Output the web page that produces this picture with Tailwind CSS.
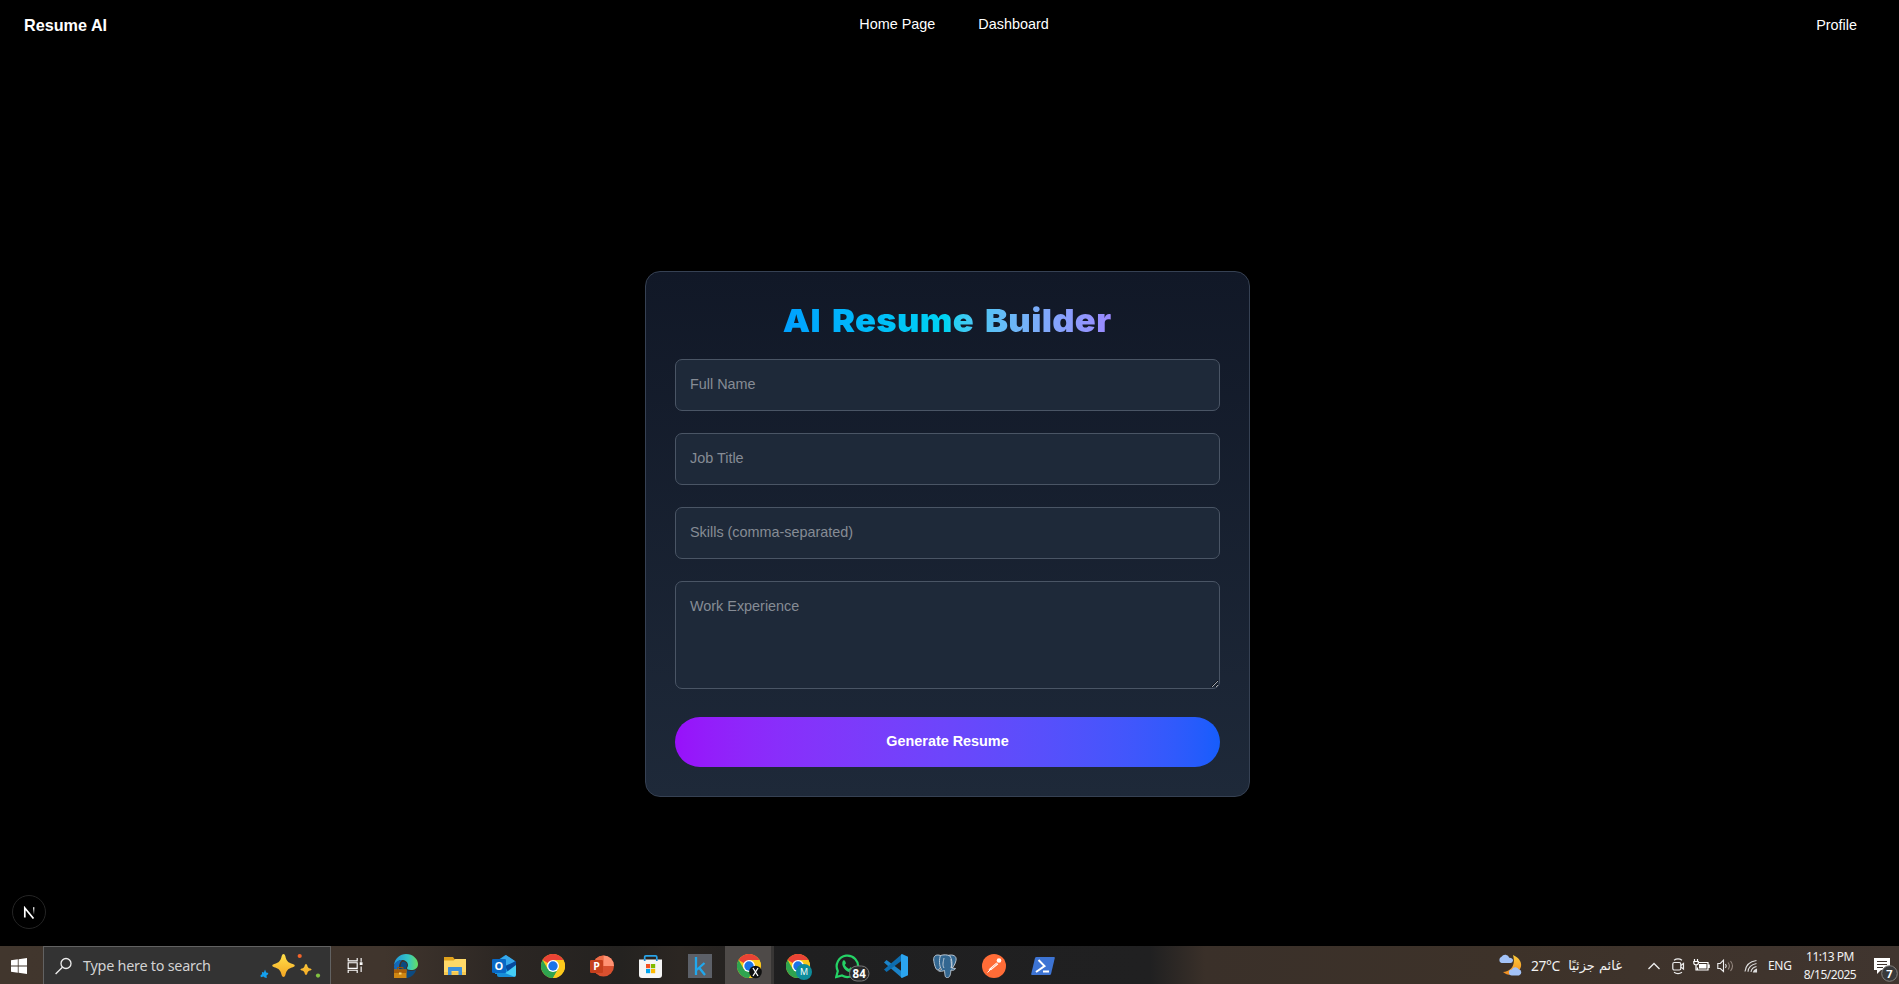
<!DOCTYPE html>
<html lang="en">
<head>
<meta charset="utf-8">
<title>Resume AI</title>
<script src="https://cdn.jsdelivr.net/npm/@tailwindcss/browser@4"></script>
</head>
<body class="flex h-screen flex-col overflow-hidden bg-black font-['Liberation_Sans',Arial,sans-serif] text-[14.4px] text-white">
<nav class="flex h-[50px] shrink-0 items-start justify-between pl-[24px] pr-[42px]">
  <div class="w-[300px] pt-[13px] text-[16.2px] leading-[25px] font-bold">Resume AI</div>
  <div class="ml-[27px] flex gap-[43px] pt-[13px] leading-[22px]"><a>Home Page</a><a>Dashboard</a></div>
  <div class="w-[300px] pt-[14px] text-right leading-[22px]">Profile</div>
</nav>

<main class="relative flex-1">
  <section class="mt-[221px] ml-[645px] flex h-[526px] w-[605px] flex-col rounded-[15px] border border-[#364153] bg-linear-to-b from-[#111827] to-[#1e2939] px-[29px] pt-[29px]">
    <h1 class="mx-auto h-[58px] scale-x-[1.08] bg-linear-to-r from-[#00a0ff] via-[#00d3f2] to-[#9a89ff] bg-clip-text font-['Inter',sans-serif] text-[32px] leading-[40px] font-black tracking-[0.3px] [word-spacing:3.5px] whitespace-nowrap text-transparent">AI Resume Builder</h1>
    <input placeholder="Full Name" class="mb-[22px] h-[52px] w-full shrink-0 rounded-[7px] border border-[#4a5565] bg-[#1e2939] px-[14px] pb-[2px] placeholder:text-[#868c95]">
    <input placeholder="Job Title" class="mb-[22px] h-[52px] w-full shrink-0 rounded-[7px] border border-[#4a5565] bg-[#1e2939] px-[14px] pb-[2px] placeholder:text-[#868c95]">
    <input placeholder="Skills (comma-separated)" class="mb-[22px] h-[52px] w-full shrink-0 rounded-[7px] border border-[#4a5565] bg-[#1e2939] px-[14px] pb-[2px] placeholder:text-[#868c95]">
    <textarea placeholder="Work Experience" class="mb-[28px] h-[108px] w-full shrink-0 rounded-[7px] border border-[#4a5565] bg-[#1e2939] px-[14px] pt-[13px] leading-[22px] placeholder:text-[#868c95]"></textarea>
    <button class="h-[50px] w-full shrink-0 rounded-full bg-linear-to-r from-[#9810fa] to-[#155dfc] font-bold">Generate Resume</button>
  </section>
  <div class="absolute bottom-[17px] left-[12px] flex size-[34px] items-center justify-center rounded-full border border-[#242424] bg-black">
    <svg class="size-[13px]" viewBox="0 0 13 13" fill="none"><defs><linearGradient id="nf" x2="0" y2="1"><stop stop-color="#fff"/><stop offset="1" stop-color="#fff" stop-opacity="0"/></linearGradient></defs><path d="M1.800 11.500V2L10.500 12.500" stroke="#fff" stroke-width="1.700"/><path d="M10 1.200h1.400v7.500H10z" fill="url(#nf)"/></svg>
  </div>
</main>

<footer class="flex h-[38px] shrink-0 bg-[linear-gradient(90deg,#41362d_0px,#40352d_385px,#2b2623_510px,#242220_620px,#2b2622_680px,#1f1f20_780px,#202021_1150px,#3a3029_1205px,#3d3229_1500px,#40352f_1899px)] font-['Open_Sans','Noto_Sans',sans-serif]">
  <div class="flex w-[43px] shrink-0 justify-center pt-[12px] pr-[5px]">
    <svg class="size-[16px]" viewBox="0 0 16 16" fill="#fff"><path d="M0 2.200 6.800 1.300v6.300H0zM7.600 1.200 16 0v7.600H7.600zM0 8.400h6.800v6.300L0 13.800zM7.600 8.400H16V16l-8.400-1.200z"/></svg>
  </div>
  <div class="flex w-[288px] shrink-0 border border-b-0 border-[#626262] bg-[#333] pl-[11px]">
    <svg class="mt-[10px] size-[18px] shrink-0" viewBox="0 0 18 18" fill="none" stroke="#eee" stroke-width="1.300"><circle cx="11" cy="6.500" r="5"/><path d="M7.400 10.200.6 17"/></svg>
    <div class="ml-[10px] w-[140px] shrink-0 pt-[9px] font-['Noto_Sans','Open_Sans',sans-serif] text-[14.400px] leading-[20px] tracking-[-0.250px] whitespace-nowrap text-[#d2d2d2]">Type here to search</div>
    <svg class="mt-[4px] ml-[33px] h-[28px] w-[66px] shrink-0" viewBox="256 951 66 28"><defs><linearGradient id="gs" x2="0" y2="1"><stop stop-color="#ffe04a"/><stop offset="1" stop-color="#f5a623"/></linearGradient></defs><path fill="url(#gs)" d="M283.500 954q1.300 0 1.800 2c1.200 5 2.500 6.500 7.500 8q2 .5 2 1.500t-2 1.700c-5 1.500-6.300 3-7.500 8q-.5 1.800-1.800 1.800t-1.800-1.800c-1.200-5-2.500-6.500-7.500-8q-2-.7-2-1.700t2-1.500c5-1.500 6.300-3 7.500-8q.5-2 1.800-2zM306 964q1 0 1.300 1.500c.4 2 1 2.600 3 3q1.300.3 1.300 1t-1.300 1.100c-2 .4-2.600 1-3 3q-.3 1.400-1.300 1.400t-1.300-1.400c-.4-2-1-2.600-3-3q-1.300-.4-1.300-1.100t1.300-1c2-.4 2.600-1 3-3q.3-1.500 1.300-1.500z"/><path fill="#14a0ee" d="m265 969.500 1.200 2.900 2.200.5-.6 1.600-1.300 1 .3 2.400-2.100-.3-1.200-1-2.600.6-.5-1.800 1.700-1.300-.2-2 2 .3z"/><circle cx="299.700" cy="956" r="2.100" fill="#f4642a"/><circle cx="318" cy="975.600" r="2.100" fill="#82c341"/></svg>
  </div>
  <div class="w-[51px] shrink-0 pt-[12px] pl-[16px]">
    <svg class="h-[15px] w-[17px]" viewBox="0 0 17 16" fill="none" stroke="#fff" stroke-width="1.200"><path d="M.7 0v3h9.600V0M.7 16v-3h9.600V16M.7 5h9.600v6H.7zM14.500 0v4M14.500 9v6"/><path d="M13 4.500h3v3h-3z" fill="#fff" stroke="none"/></svg>
  </div>

  <div class="flex [&>div]:w-[49px] [&>div]:shrink-0 [&>div]:pl-[12px] [&>div]:pt-[8px]">
    <div><svg class="size-[24px]" viewBox="0 0 24 24"><defs><linearGradient id="e1"><stop stop-color="#2196dc"/><stop offset=".6" stop-color="#35c7c4"/><stop offset="1" stop-color="#67e060"/></linearGradient></defs><path d="M0 11C1 4 6 0 12 0c7 0 12 5 12 10 0 4-3 6-7 6-3 0-4-1-4-2s1-1 1-3c0-3-3-5-6-5S2 8 0 11z" fill="url(#e1)"/><path d="M0 12C1 8 4 6 8 6c-2 2-3 4-3 7 0 5 4 10 10 10-9 3-15-3-15-11z" fill="#1268b8"/><path d="M8 8c3-1 5 1 5 3 0 1-1 2-1 3 0 3 5 4 10 2-1 4-5 8-10 8-5-2-7-12-4-16z" fill="#0c4a80"/><path d="M0 15.500h12.500V24H0z" fill="#d08712"/><path d="M0 15.500h12.500v3.500H0z" fill="#a85d08"/><path d="M3.500 15.500v-2H9v2" stroke="#9a5306" fill="none"/><path d="M5 18.500h2.500v2H5z" fill="#ffd56a"/></svg></div>
    <div><svg class="h-[24px] w-[24px]" viewBox="0 0 24 24"><path d="M1 3h9l1.500 2H23v4H1z" fill="#e0a21c"/><path d="M1 6.500h9.500l2-1.500H23v16H1z" fill="#ffd968"/><path d="M1 18h22v3H1z" fill="#f4c74f"/><path d="M5 21v-7.500q0-.5.500-.5h13q.5 0 .5.500V21h-3.500v-4h-7v4z" fill="#3c8fdc"/></svg></div>
    <div><svg class="size-[24px]" viewBox="0 0 24 24"><path d="M3 8 13.500 1 24 8v12H3z" fill="#1490df"/><path d="m7 6 7-5 9 6-8 7z" fill="#37a9ed"/><path d="M13 12 24 7v6l-8 5z" fill="#064a9e"/><path d="M8 23 24 11v10q0 2-2 2z" fill="#45cdf5"/><path d="M5 16v5q0 2 2 2h16z" fill="#178ed8"/><rect y="5" width="14" height="14" rx="1.300" fill="#0868c5"/><text x="7" y="16" text-anchor="middle" font-size="11" font-weight="700" fill="#fff">O</text></svg></div>
    <div><svg class="size-[24px]" viewBox="0 0 24 24"><g id="chr"><circle cx="12" cy="12" r="12" fill="#fcc91c"/><path d="M12 12 1.600 6A12 12 0 0 1 22.400 6z" fill="#ea4335"/><path d="M1.600 6A12 12 0 0 0 12 24l5.200-9L12 12 6.800 15z" fill="#2fa44f"/><path d="M12 6h10.400A12 12 0 0 1 12 24l5.200-9z" fill="#fcc91c"/><circle cx="12" cy="12" r="6" fill="#fff"/><circle cx="12" cy="12" r="4.700" fill="#1a73e8"/></g></svg></div>
    <div><svg class="size-[24px]" viewBox="0 0 24 24"><circle cx="13.500" cy="12" r="10.500" fill="#d8502f"/><path d="M13.500 1.500V12H3a10.500 10.500 0 0 1 10.500-10.500z" fill="#ed6c47"/><path d="M13.500 1.500A10.500 10.500 0 0 1 24 12H13.500z" fill="#ff9273"/><rect y="6" width="13" height="13" rx="1.200" fill="#c5401d"/><text x="6.500" y="16.300" text-anchor="middle" font-size="10.500" font-weight="700" fill="#fff">P</text></svg></div>
    <div><svg class="size-[24px]" viewBox="0 0 24 24"><path d="M5.700 7V3q0-1.200 1.200-1.200h9.700Q17.800 1.800 17.800 3v4" fill="none" stroke="#2aa4e8" stroke-width="1.700"/><path d="M0 5.500h23V21q0 3-3 3H3q-3 0-3-3z" fill="#f5f5f5"/><path d="M5.700 7V5M17.800 7V5" stroke="#1c86d1" stroke-width="1.700"/><path d="M7 10h4.200v4.200H7z" fill="#f25022"/><path d="M12 10h4.200v4.200H12z" fill="#7fba00"/><path d="M7 15h4.200v4.200H7z" fill="#00a4ef"/><path d="M12 15h4.200v4.200H12z" fill="#ffb900"/></svg></div>
    <div><svg class="size-[24px]" viewBox="0 0 24 24"><path d="M0 0h24v24H0z" fill="#5c6068"/><path d="M8 3v18M16.500 9 8.500 16M11 13.500l6 7.500" fill="none" stroke="#20a8ee" stroke-width="2.300"/></svg></div>
    <div class="border-r-3 border-[#383635] bg-[#4e4a48]"><svg class="size-[26px]" viewBox="0 0 26 26"><use href="#chr"/><circle cx="18.500" cy="18" r="6.300" fill="#111"/><path d="m16 14 5 8M21 14l-5 8" stroke="#fff" stroke-width="1.300"/></svg></div>
    <div><svg class="size-[27px]" viewBox="0 0 27 27"><use href="#chr"/><circle cx="18" cy="18" r="8" fill="#0e8c9b"/><text x="18" y="21.300" text-anchor="middle" font-size="9" fill="#fff">M</text></svg></div>
    <div><svg class="h-[30px] w-[36px]" viewBox="0 0 36 30"><path d="m1.200 23 1.600-6A10.700 10.700 0 1 1 7 21.500z" fill="none" stroke="#25d366" stroke-width="2.200"/><path d="M8 6.500q1.300-.8 2 .3l1 2.500-1.200 1.700q1.500 2.800 4.200 4l1.600-1.700 3.100 1.400q.5 3-3 3.600C11.500 18.500 5 12 8 6.500z" fill="#25d366"/><rect x="14.500" y="12" width="19.500" height="15" rx="7.500" fill="#2a2a2b" stroke="#777"/><text x="24.200" y="23.600" text-anchor="middle" font-size="11.500" font-weight="700" fill="#fff">84</text></svg></div>
    <div><svg class="size-[24px]" viewBox="0 0 24 24"><path d="M0 8.500 2.500 6 18 17.500V24L0 8.500z" fill="#1b83c8"/><path d="M0 15.500 2.500 18 18 6.500V0L0 15.500z" fill="#0d6cae"/><path d="M18 0 24 2.800v18.400L18 24l-1-.8V.8z" fill="#2ba4ef"/></svg></div>
    <div><svg class="size-[24px]" viewBox="0 0 24 24"><g fill="#336791" stroke="#c8d2dc" stroke-width=".9"><path d="M7.500 1.500C3 0 .3 2 .7 6c.4 4 2 10 4 10 1.500 0 2-2 3-3zM15 1.500c5-1.500 9 .5 8 5-.7 3.500-2.500 6-4 8z"/><path d="M7.500 1.500c3-1 7-1 9.500.5 2 3 2.500 8 1.500 12l4 .5c-1 2-3 2-4.500 1.500-.5 3-.3 7-3.500 7.700-3 .3-2.500-3.700-3-7.200-1.500.8-5 1-6 .5 0-1 2-1 3-1.500C6 12 6 5 7.500 1.500z"/><path d="M11 14c-2-3-.5-7 0-10M18 5c0 4 1 6 0 9" fill="none"/></g></svg></div>
    <div><svg class="size-[24px]" viewBox="0 0 24 24"><circle cx="12" cy="12" r="12" fill="#ff6c37"/><circle cx="17" cy="6.500" r="2.300" fill="#fff"/><path d="m14.500 8.500 1.800 1.800-7.300 6-2.500-.7z" fill="#fff"/><path d="m5.500 18.500 9-9" stroke="#fff"/><path d="m9.500 14.500 5.500-5" stroke="#ff8a5f" stroke-width=".7"/></svg></div>
    <div><svg class="size-[24px]" viewBox="0 0 24 24"><path d="M5.500 3H23q1 0 .8 1L20 20q-.3 1-1.300 1H1q-1 0-.8-1L4 4q.4-1 1.500-1z" fill="#3d74d4"/><path d="m7.500 6 6 6-8.500 6M12 17.500h6" fill="none" stroke="#fff" stroke-width="2"/></svg></div>
  </div>

  <div class="ml-auto flex w-[401px] shrink-0 text-[#f2f2f2]">
    <svg class="mt-[8px] h-[24px] w-[24px] shrink-0" viewBox="0 0 24 24"><defs><linearGradient id="mo" x2="0" y2="1"><stop stop-color="#ffcf3c"/><stop offset="1" stop-color="#f08a20"/></linearGradient></defs><path d="M15 1c7 3 10 9 7 14-3 6-11 8-17 3 8 0 13-7 10-17z" fill="url(#mo)"/><path d="M3.500 9a3.300 3.300 0 0 1 0-6.200 4.300 4.300 0 0 1 7.800 1q4 .3 3.700 3-.5 2.200-2.500 2.200zM14 21.500a3 3 0 0 1-.2-6 4 4 0 0 1 7-.2 3.200 3.200 0 0 1 .2 6.200z" fill="#a3c3f8"/></svg>
    <div class="ml-[9px] w-[37px] shrink-0 pt-[10px] font-['Noto_Sans','Open_Sans',sans-serif] text-[13.800px] leading-[20px] tracking-[-0.4px]">27°C</div>
    <div dir="rtl" class="w-[54px] shrink-0 pt-[11px] font-['DejaVu_Sans',sans-serif] text-[13px] leading-[18px] whitespace-nowrap">غائم جزئيًا</div>
    <svg class="mt-[15px] ml-[25px] h-[10px] w-[14px] shrink-0" viewBox="0 0 14 10" fill="none" stroke="#eee" stroke-width="1.300"><path d="m1.500 8 5.500-5.500L12.500 8"/></svg>
    <svg class="mt-[12px] ml-[11px] h-[17px] w-[13px] shrink-0" viewBox="0 0 13 17" fill="none" stroke="#eee" stroke-width="1.200"><rect x=".8" y="4.500" width="8" height="7.500" rx="1.500"/><path d="m8.800 7.500 2.700-2v5.500l-2.700-2M2 2.200q4-2.600 8 0M2 14.300q4 2.600 8 0"/></svg>
    <svg class="mt-[12px] ml-[8px] h-[14px] w-[17px] shrink-0" viewBox="0 0 17 14" fill="none" stroke="#fff" stroke-width="1.200"><path d="M6 4.500h9V12H4.500V9.500M16.200 6.500V10M1.500 1v2M4.500 1v2M.8 3.500h4.500v1.800q0 1.500-2.200 1.500T.8 5zM3 7v5h2"/><path d="M6 6h7.500v4.500H6z" fill="#fff" stroke="none"/></svg>
    <svg class="mt-[13px] ml-[7px] h-[14px] w-[18px] shrink-0" viewBox="0 0 18 14" fill="none" stroke="#eee" stroke-width="1.100"><path d="M.8 4.500h2.500L6.500 1.200v11.300L3.300 9.500H.8z"/><path d="M8.500 5q1.500 2 0 4"/><path d="M11 3.500q2.800 3.500 0 7M13.500 2q4 5 0 10" stroke="#94877f"/></svg>
    <svg class="mt-[13px] ml-[9px] h-[14px] w-[14px] shrink-0" viewBox="0 0 14 14" fill="none" stroke="#ddd" stroke-width="1.100"><path d="M1 12.500Q2 3 12.500 1.500M4 12.800Q4.500 6 12.500 4.500M7 13q.5-4.500 5.500-5.500"/><path d="M9.500 13q.4-2 3-2.700V13z" fill="#ddd"/></svg>
    <div class="ml-[10px] w-[32px] shrink-0 pt-[10px] font-['Noto_Sans',sans-serif] text-[12px] leading-[20px] tracking-[-0.300px]">ENG</div>
    <div class="w-[60px] shrink-0 pt-[2px] text-center font-['Noto_Sans',sans-serif] text-[12px] leading-[18px] tracking-[-0.500px] whitespace-nowrap">11:13 PM<br>8/15/2025</div>
    <svg class="mt-[10px] ml-[13px] h-[26px] w-[26px] shrink-0" viewBox="1873 956 26 26"><path d="M1874 958h16v12h-9l-4 4v-4h-3z" fill="#fff"/><path d="M1877 961.500h10M1877 964.500h10M1877 967.500h6" stroke="#40352f"/><circle cx="1889.500" cy="973.500" r="7.800" fill="#39393a" stroke="#83807d"/><text x="1889.500" y="977.500" text-anchor="middle" font-size="11" font-weight="700" fill="#fff">7</text></svg>
  </div>
</footer>
</body>
</html>
